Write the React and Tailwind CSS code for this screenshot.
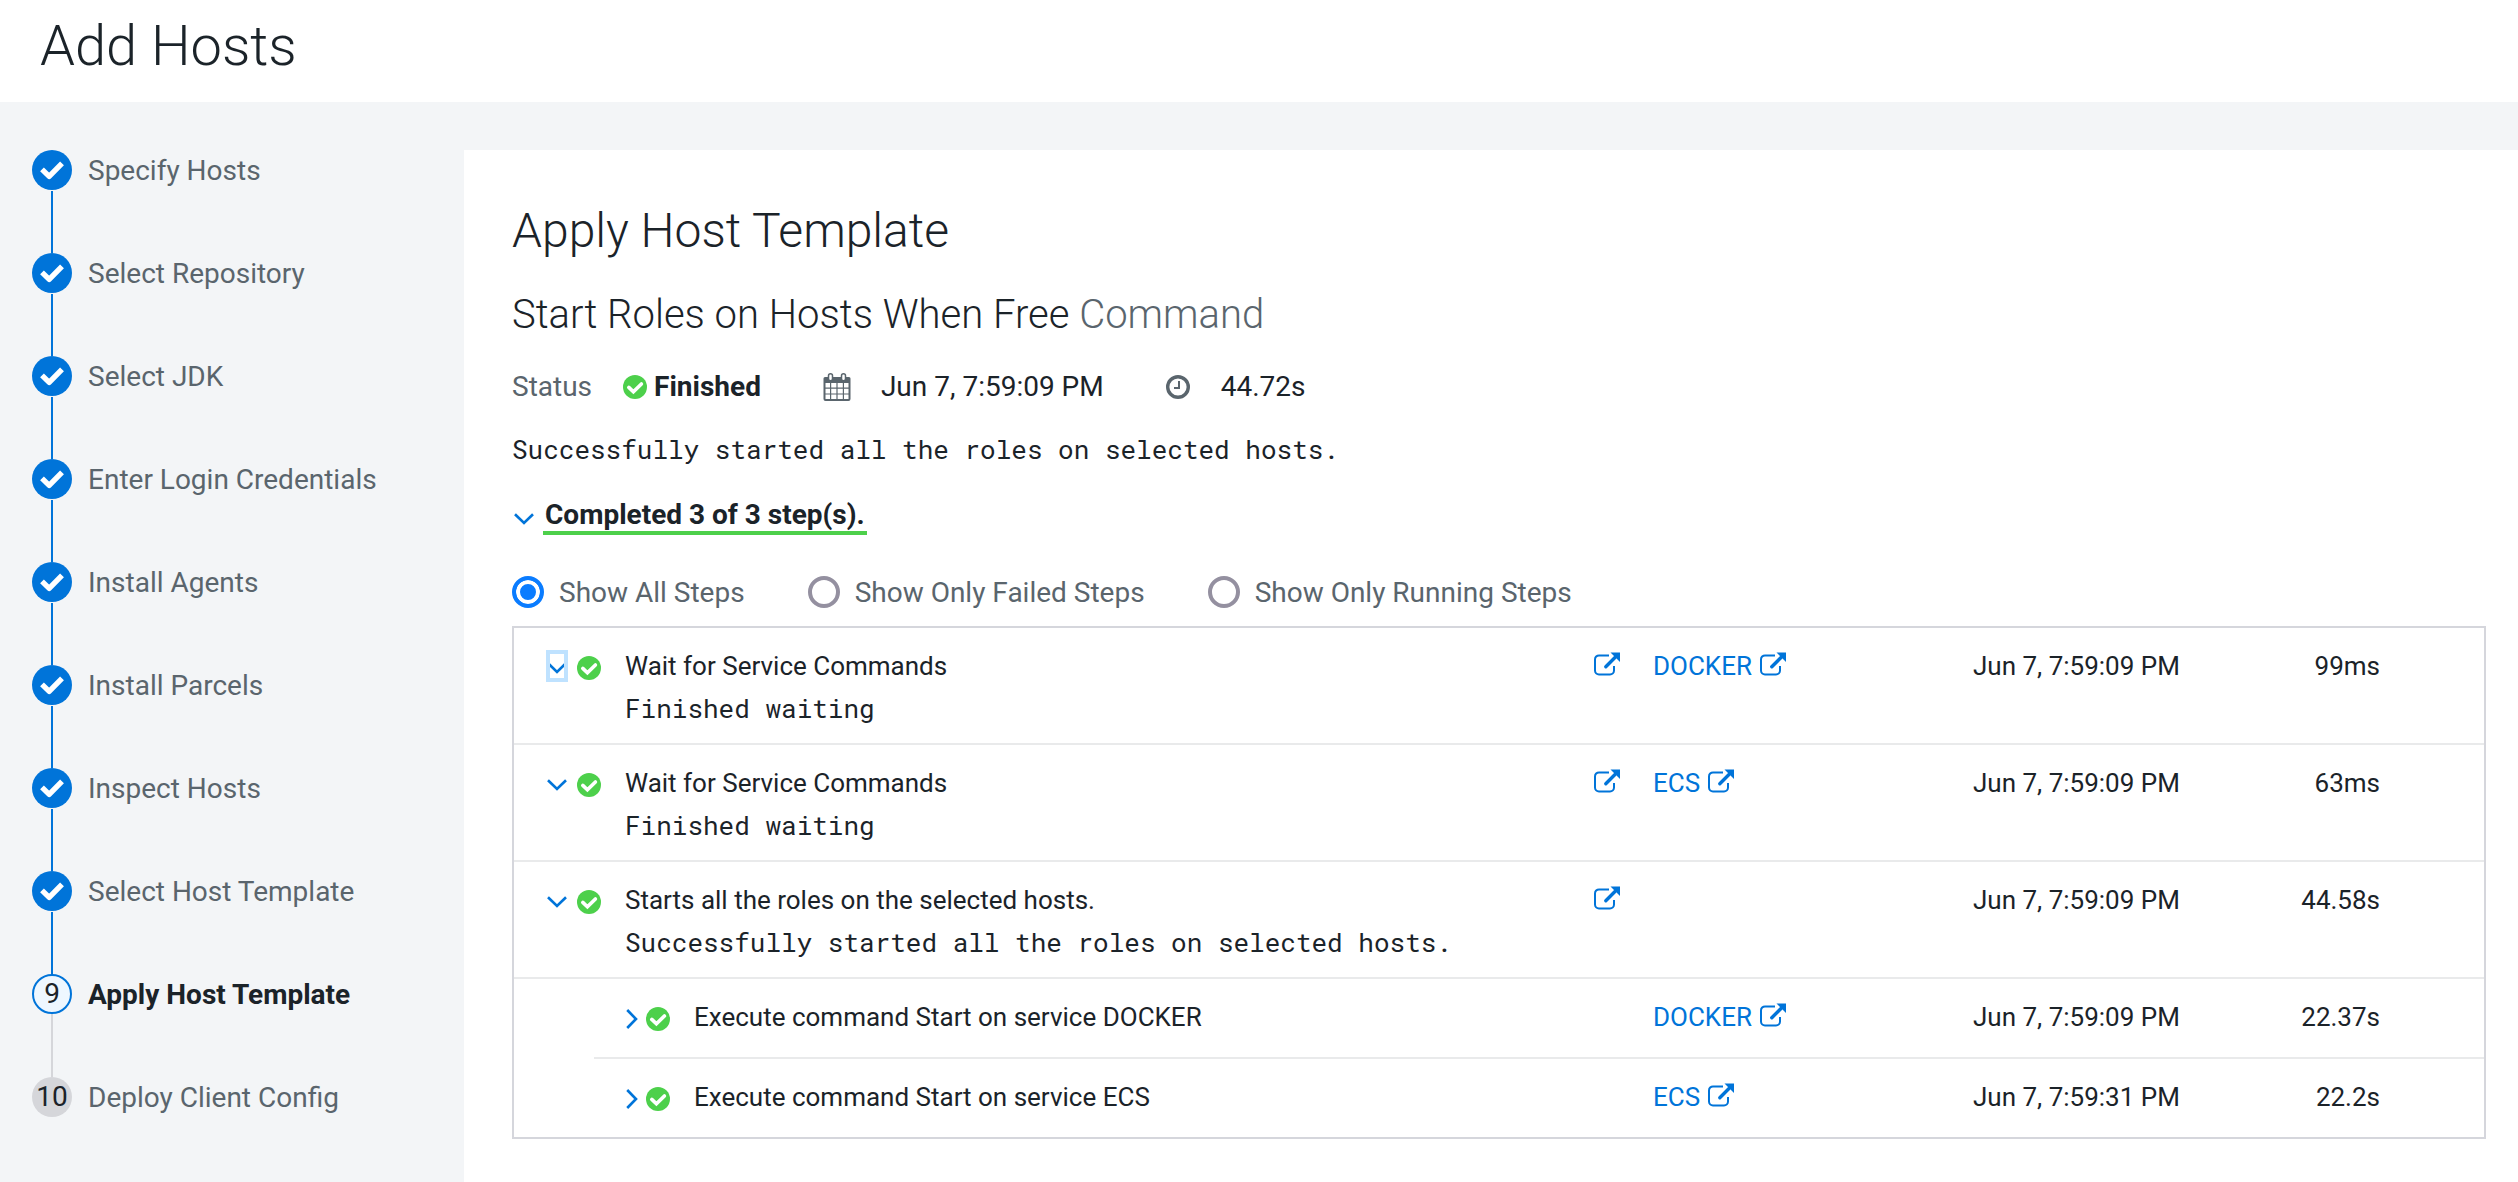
import React, { useState } from "react";

const wizardSteps = [
  "Specify Hosts",
  "Select Repository",
  "Select JDK",
  "Enter Login Credentials",
  "Install Agents",
  "Install Parcels",
  "Inspect Hosts",
  "Select Host Template",
  "Apply Host Template",
  "Deploy Client Config",
];
const CURRENT = 8;

function Tick({ className }) {
  return (
    <svg viewBox="0 0 24 24" className={className} fill="none" stroke="currentColor" strokeWidth="5.4" strokeLinejoin="round" aria-hidden="true">
      <path d="M2 11.4 L9.2 18.4 L22 5.4" />
    </svg>
  );
}

function Success() {
  return (
    <svg viewBox="0 0 24 24" className="size-6 shrink-0" role="img" aria-label="Success">
      <circle cx="12" cy="12" r="12" fill="#4dd04b" />
      <path d="M5.8 12.4 L10.4 16.8 L18.400 9" fill="none" stroke="#fff" strokeWidth="3.6" strokeLinecap="round" />
    </svg>
  );
}

function ChevronDown() {
  return (
    <svg viewBox="0 0 20 12" className="h-3 w-5 shrink-0" fill="none" stroke="#0074d9" strokeWidth="2.6" aria-hidden="true">
      <path d="M1 1.2 L10 10 L19 1.2" />
    </svg>
  );
}

function ChevronRight() {
  return (
    <svg viewBox="0 0 12 20" className="h-5 w-3 shrink-0" fill="none" stroke="#0074d9" strokeWidth="2.6" aria-hidden="true">
      <path d="M1.2 1 L10 10 L1.2 19" />
    </svg>
  );
}

function External() {
  return (
    <svg viewBox="0 0 26 24" className="mb-1 h-6 w-[26px] shrink-0" fill="none" stroke="currentColor" aria-hidden="true">
      <path d="M15 3.4 H5 A4 4 0 0 0 1 7.400 V18.500 A4 4 0 0 0 5 22.500 H16 A4 4 0 0 0 20 18.500 V14" strokeWidth="2" />
      <path d="M11.800 14.700 L21 5.500" strokeWidth="3.400" strokeLinecap="round" />
      <path d="M16.500 0.500 H26 V10 Z" fill="currentColor" stroke="none" />
    </svg>
  );
}

function Calendar() {
  return (
    <svg viewBox="0 0 28 28" className="size-7" aria-hidden="true">
      <path d="M2 4 H26 A1.500 1.500 0 0 1 27.500 5.500 V26 A2 2 0 0 1 25.500 28 H2.500 A2 2 0 0 1 0.500 26 V5.500 A1.500 1.500 0 0 1 2 4 Z" fill="#5a656d" />
      <path d="M2.500 10 h4.500 v4.500 h-4.500z M8.200 10 h5.200 v4.500 h-5.200z M14.600 10 h5.200 v4.500 h-5.200z M21 10 h4.500 v4.500 h-4.500z M2.500 15.700 h4.500 v4.700 h-4.500z M8.200 15.700 h5.200 v4.700 h-5.200z M14.600 15.700 h5.200 v4.700 h-5.200z M21 15.700 h4.500 v4.700 h-4.500z M2.500 21.600 h4.500 v4.400 h-4.500z M8.200 21.600 h5.200 v4.400 h-5.200z M14.600 21.600 h5.200 v4.400 h-5.200z M21 21.600 h4.500 v4.400 h-4.500z" fill="#fff" />
      <rect x="5.500" y="0.800" width="4" height="7" rx="2" fill="#fff" stroke="#5a656d" strokeWidth="1.500" />
      <rect x="18.500" y="0.800" width="4" height="7" rx="2" fill="#fff" stroke="#5a656d" strokeWidth="1.500" />
    </svg>
  );
}

function Clock() {
  return (
    <svg viewBox="0 0 24 24" className="size-6" fill="none" stroke="#5a656d" aria-hidden="true">
      <circle cx="12" cy="12" r="10.300" strokeWidth="3.400" />
      <path d="M13 6 V13 H8" strokeWidth="2" />
    </svg>
  );
}

function WizardStep({ label, index }) {
  const done = index < CURRENT;
  const current = index === CURRENT;
  return (
    <li className="flex gap-4" aria-current={current ? "step" : undefined}>
      <div className="flex flex-col items-center">
        {done && (
          <span className="flex size-10 items-center justify-center rounded-full bg-[#0074d9] text-white">
            <Tick className="size-6" />
          </span>
        )}
        {current && (
          <span className="flex size-10 items-center justify-center rounded-full border-2 border-[#0074d9] bg-[#eef7ff] text-[28px] leading-9">
            {index + 1}
          </span>
        )}
        {!done && !current && (
          <span className="flex size-10 items-center justify-center rounded-full bg-[#d5d6da] text-[28px] leading-9">
            {index + 1}
          </span>
        )}
        {index < wizardSteps.length - 1 && (
          <span className={done ? "mt-px h-[62px] w-0.5 bg-[#0074d9]" : "h-[63px] w-0.5 bg-[#d5d6da]"} />
        )}
      </div>
      <span className={current ? "text-[28px] leading-[42px] font-bold" : "text-[28px] leading-[42px] text-[#5a656d]"}>
        {label}
      </span>
    </li>
  );
}

const filters = ["Show All Steps", "Show Only Failed Steps", "Show Only Running Steps"];

const commandRows = [
  { title: "Wait for Service Commands", message: "Finished waiting", details: true, service: "DOCKER", start: "Jun 7, 7:59:09 PM", duration: "99ms", focused: true },
  { title: "Wait for Service Commands", message: "Finished waiting", details: true, service: "ECS", start: "Jun 7, 7:59:09 PM", duration: "63ms" },
  {
    title: "Starts all the roles on the selected hosts.",
    message: "Successfully started all the roles on selected hosts.",
    details: true,
    start: "Jun 7, 7:59:09 PM",
    duration: "44.58s",
    children: [
      { title: "Execute command Start on service DOCKER", service: "DOCKER", start: "Jun 7, 7:59:09 PM", duration: "22.37s" },
      { title: "Execute command Start on service ECS", service: "ECS", start: "Jun 7, 7:59:31 PM", duration: "22.2s" },
    ],
  },
];

function RowColumns({ row }) {
  return (
    <div className="flex w-[890px] shrink-0">
      <div className="flex h-10 w-[59px] items-center text-[#0074d9]">
        {row.details && (
          <a href="#details" aria-label="Command details">
            <External />
          </a>
        )}
      </div>
      <div className="w-[320px] text-[#0074d9]">
        {row.service && (
          <a href="#service" className="inline-flex h-10 items-center gap-2">
            {row.service}
            <External />
          </a>
        )}
      </div>
      <div className="flex-1">{row.start}</div>
      <div className="pr-[104px] text-right">{row.duration}</div>
    </div>
  );
}

function NestedRow({ row }) {
  return (
    <li className="flex pt-[18px] pb-4 pl-8 text-[26px] leading-10">
      <div className="flex h-11 w-[68px] shrink-0 items-center gap-2">
        <button type="button" aria-label="Expand" className="flex h-8 items-center">
          <ChevronRight />
        </button>
        <Success />
      </div>
      <p className="min-w-0 flex-1">{row.title}</p>
      <RowColumns row={row} />
    </li>
  );
}

function CommandRow({ row }) {
  return (
    <li>
      <div className="flex pt-[18px] pb-[15px] pl-8 text-[26px] leading-10">
        <div className="flex h-11 w-[79px] shrink-0 items-center gap-[9px]">
          <button
            type="button"
            aria-label="Collapse"
            className={
              row.focused
                ? "mb-1 flex h-8 w-[22px] items-center justify-center overflow-hidden border-4 border-[#bfe2ff] pt-1"
                : "mb-1 flex h-8 w-[22px] items-center justify-center pt-1"
            }
          >
            <ChevronDown />
          </button>
          <Success />
        </div>
        <div className="min-w-0 flex-1">
          <p>{row.title}</p>
          <p className="pt-0.5 font-['Roboto_Mono','Liberation_Mono',monospace]">{row.message}</p>
        </div>
        <RowColumns row={row} />
      </div>
      {row.children && (
        <div className="border-t-2 border-[#e9eaeb] pl-20">
          <ul className="divide-y-2 divide-[#e9eaeb]">
            {row.children.map((child) => (
              <NestedRow key={child.title} row={child} />
            ))}
          </ul>
        </div>
      )}
    </li>
  );
}

export default function App() {
  const [filter, setFilter] = useState(0);
  return (
    <div className="flex min-h-screen flex-col bg-[#f3f5f7] font-['Roboto',sans-serif] text-[#1b2329]">
      <header className="bg-white px-10 pt-[14px] pb-6">
        <h1 className="text-[56px] leading-[64px] font-light">Add Hosts</h1>
      </header>
      <div className="flex flex-1 pt-12">
        <nav aria-label="Wizard" className="w-[464px] shrink-0 pl-8">
          <ol>
            {wizardSteps.map((label, i) => (
              <WizardStep key={label} label={label} index={i} />
            ))}
          </ol>
        </nav>
        <main className="min-w-0 flex-1 bg-white pt-[49px] pr-8 pl-12">
          <h2 className="text-[48px] leading-[64px] font-light">Apply Host Template</h2>
          <h3 className="mt-7 text-[40px] leading-[48px] font-light">
            Start Roles on Hosts When Free <span className="text-[#5a656d]">Command</span>
          </h3>
          <div className="mt-7 flex items-center text-[28px] leading-10">
            <span className="mr-[31px] text-[#5a656d]">Status</span>
            <Success />
            <span className="ml-[7px] font-bold">Finished</span>
            <span className="mr-[30px] ml-[62px]"><Calendar /></span>
            <span>Jun 7, 7:59:09 PM</span>
            <span className="mr-[31px] ml-[62px]"><Clock /></span>
            <span>44.72s</span>
          </div>
          <p className="mt-[22px] font-['Roboto_Mono','Liberation_Mono',monospace] text-[26px] leading-10">
            Successfully started all the roles on selected hosts.
          </p>
          <button type="button" aria-expanded="true" className="mt-[30px] flex items-center gap-[9px] pl-0.5 text-[28px] leading-8 font-bold">
            <span className="pt-1"><ChevronDown /></span>
            <span className="border-b-4 border-[#4dd04b] px-0.5">Completed 3 of 3 step(s).</span>
          </button>
          <div role="radiogroup" aria-label="Filter steps" className="mt-[37px] flex h-10 gap-[63px] text-[28px] leading-[38px] text-[#5a656d]">
            {filters.map((label, i) => (
              <label key={label} className="flex items-center gap-[15px]">
                <input
                  type="radio"
                  name="filter"
                  checked={filter === i}
                  onChange={() => setFilter(i)}
                  className="size-8 appearance-none rounded-full border-4 border-[#9490a0] bg-white checked:border-[#0a7cff] checked:bg-[#0a7cff] checked:shadow-[inset_0_0_0_4px_white]"
                />
                <span className="pt-0.5">{label}</span>
              </label>
            ))}
          </div>
          <ul className="mt-[14px] divide-y-2 divide-[#e9eaeb] border-2 border-[#d5d6dc]">
            {commandRows.map((row, i) => (
              <CommandRow key={i} row={row} />
            ))}
          </ul>
        </main>
      </div>
    </div>
  );
}
